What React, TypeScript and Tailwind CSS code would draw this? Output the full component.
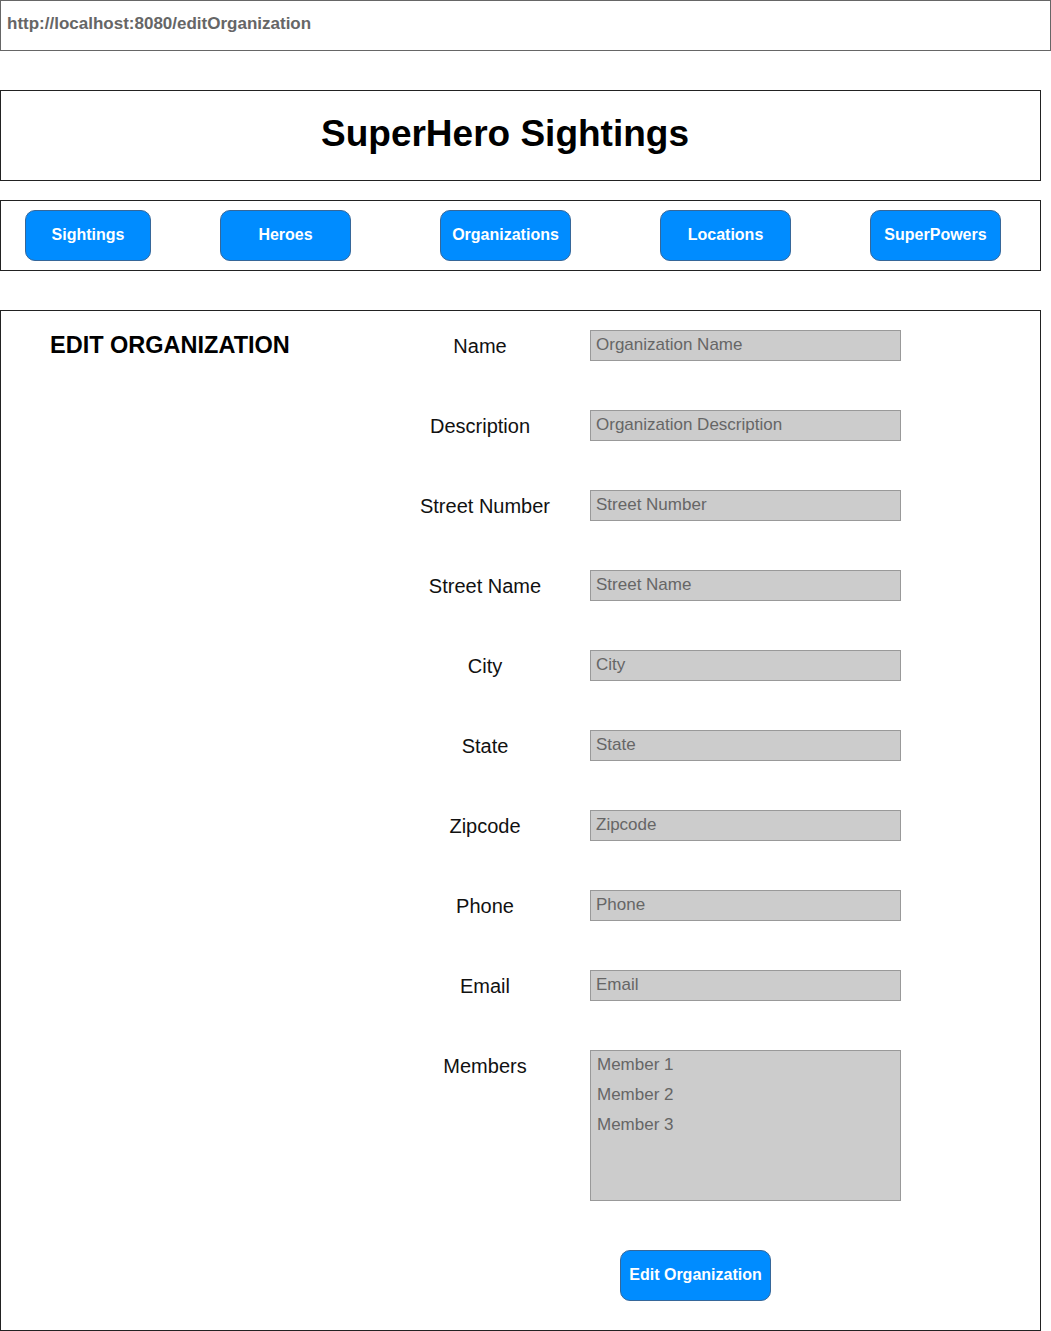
const navItems = [
  { label: "Sightings", cls: "ml-[24px] w-[126px]" },
  { label: "Heroes", cls: "ml-[69px] w-[131px]" },
  { label: "Organizations", cls: "ml-[89px] w-[131px]" },
  { label: "Locations", cls: "ml-[89px] w-[131px]" },
  { label: "SuperPowers", cls: "ml-[79px] w-[131px]" },
];

const fields = [
  { label: "Name", placeholder: "Organization Name", shift: "pr-[10px]" },
  { label: "Description", placeholder: "Organization Description", shift: "pr-[10px]" },
  { label: "Street Number", placeholder: "Street Number", shift: "" },
  { label: "Street Name", placeholder: "Street Name", shift: "" },
  { label: "City", placeholder: "City", shift: "" },
  { label: "State", placeholder: "State", shift: "" },
  { label: "Zipcode", placeholder: "Zipcode", shift: "" },
  { label: "Phone", placeholder: "Phone", shift: "" },
  { label: "Email", placeholder: "Email", shift: "" },
];

const members = ["Member 1", "Member 2", "Member 3"];

const App = () => {
  return (
    <div className="w-[1051px] h-[1331px] bg-white font-['Liberation_Sans',Arial,sans-serif] text-[#111]">
      <div className="w-[1051px] h-[51px] border border-[#666] flex items-center px-[6px] pb-[4px]">
        <span className="text-[17px] font-bold text-[#666]">http://localhost:8080/editOrganization</span>
      </div>

      <div className="mt-[39px] w-[1041px] h-[91px] border border-[#222] flex items-center justify-center pr-[31px] pb-[4px]">
        <h1 className="text-[37px] font-bold text-black">SuperHero Sightings</h1>
      </div>

      <div className="mt-[19px] w-[1041px] h-[71px] border border-[#222] flex items-center">
        {navItems.map((n) => (
          <button
            key={n.label}
            className={`${n.cls} h-[51px] rounded-[10px] bg-[#008cff] border border-[#36679a] text-white text-[16px] font-bold pb-[2px]`}
          >
            {n.label}
          </button>
        ))}
      </div>

      <div className="mt-[39px] w-[1041px] h-[1021px] border border-[#222] flex">
        <div className="w-[399px] pl-[49px] pt-[21px]">
          <h2 className="text-[23.5px] leading-[26px] font-bold text-black">EDIT ORGANIZATION</h2>
        </div>
        <div className="pt-[19px] flex flex-col">
          {fields.map((f) => (
            <div key={f.label} className="flex items-center h-[31px] mb-[49px]">
              <div className={`w-[170px] text-center text-[20px] ${f.shift}`}>{f.label}</div>
              <div className="ml-[20px] w-[311px] h-[31px] bg-[#cccccc] border border-[#999] flex items-center pl-[5px] pb-[2px] text-[17px] text-[#666]">
                {f.placeholder}
              </div>
            </div>
          ))}
          <div className="flex items-start">
            <div className="w-[170px] text-center text-[20px] leading-[31px] pt-[1px]">Members</div>
            <div className="ml-[20px] w-[311px] h-[151px] bg-[#cccccc] border border-[#999] pl-[6px] text-[17px] text-[#666]">
              <div className="-mt-[1px] leading-[30px]">
                {members.map((m) => (
                  <div key={m}>{m}</div>
                ))}
              </div>
            </div>
          </div>
          <button className="mt-[49px] ml-[220px] w-[151px] h-[51px] rounded-[10px] bg-[#008cff] border border-[#36679a] text-white text-[16px] font-bold pb-[2px]">
            Edit Organization
          </button>
        </div>
      </div>
    </div>
  );
};

export default App;
